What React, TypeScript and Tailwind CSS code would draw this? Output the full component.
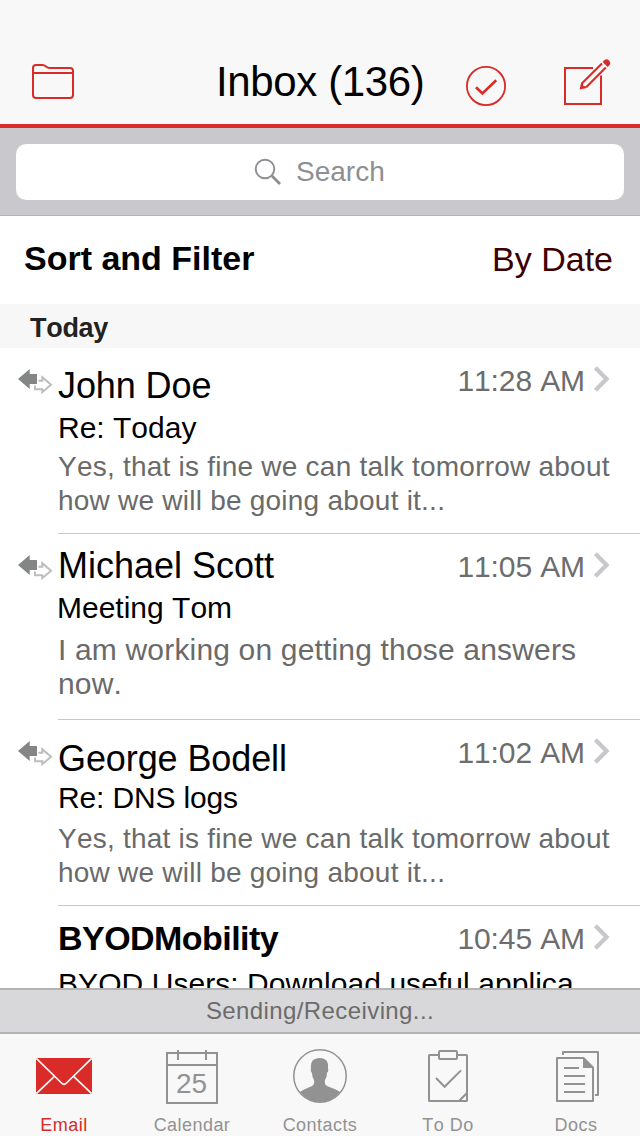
import type { ReactNode } from "react";

const ReplyIcon = () => (
  <svg className="mt-5 ml-[17px] h-7 w-9 shrink-0" viewBox="17 368 36 28" fill="none">
    <path d="M38.5 380.7H42.3V377.3L51 384.8L42.3 392.2V389.2H35V385.5" stroke="#bdbdbd" strokeWidth="2" />
    <path d="M18 379L29.7 369V374H37V384H29.7V389Z" fill="#848685" />
  </svg>
);

const Chevron = () => (
  <svg className="mt-[18px] ml-[8px] h-[26px] w-[18px] shrink-0" viewBox="593 366 18 26" fill="none">
    <path d="M595.4 367.7L606.6 379L595.4 390.3" stroke="#c7c7cc" strokeWidth="4.2" />
  </svg>
);

type MessageProps = {
  icon?: boolean;
  time: string;
  name: string;
  nameClass: string;
  subject: string;
  subjectClass: string;
  body?: string[];
  bodyClass?: string;
};

function Message({ icon, time, name, nameClass, subject, subjectClass, body, bodyClass }: MessageProps) {
  return (
    <article className="flex h-[186px] shrink-0">
      <div className="w-[58px] shrink-0">{icon && <ReplyIcon />}</div>
      <div className="flex min-w-0 flex-1 flex-col border-b border-[#c8c7cc] whitespace-nowrap">
        <div className="flex justify-between">
          <h2 className={`leading-[41px] text-black ${nameClass}`}>{name}</h2>
          <div className="flex h-[41px] pr-[29px]">
            <time className="mt-4 text-[30px] leading-[33px] tracking-[-0.1px] text-[#6d6d6d]">{time}</time>
            <Chevron />
          </div>
        </div>
        <h3 className={`text-[30px] leading-[33px] text-black ${subjectClass}`}>{subject}</h3>
        <div className={`leading-[34px] text-[#6a6a6a] ${bodyClass ?? ""}`}>
          {body?.map((line) => <p key={line}>{line}</p>)}
        </div>
      </div>
    </article>
  );
}

function Tab({ label, active, children }: { label: string; active?: boolean; children: ReactNode }) {
  return (
    <button className={`flex w-32 flex-col items-center ${active ? "text-[#d92b27]" : "text-[#929292]"}`}>
      <svg className="mt-[10px] h-16 w-16" viewBox="0 0 64 64" fill="none">{children}</svg>
      <span className="mt-[6px] text-[18px] leading-[22px] tracking-[0.45px]">{label}</span>
    </button>
  );
}

export default function App() {
  return (
    <div className="flex h-[1136px] w-[640px] flex-col overflow-hidden bg-white font-['Liberation_Sans',Arial,sans-serif] [font-kerning:none]">
      <header className="flex h-32 shrink-0 items-start border-b-4 border-[#d92b27] bg-[#f8f8f8] text-[#d92b27]">
        <svg className="mt-[60px] ml-[30px] h-[42px] w-[46px]" viewBox="30 60 46 42" fill="none" stroke="currentColor" strokeWidth="2">
          <path d="M36 65H42.5C46 65 46 68 49.5 68H70a3 3 0 0 1 3 3V95a3 3 0 0 1-3 3H36a3 3 0 0 1-3-3V68a3 3 0 0 1 3-3ZM33 73H73" />
        </svg>
        <h1 className="mt-[58px] ml-[140px] w-[248px] text-[42px] leading-[47px] tracking-[-0.38px] whitespace-nowrap text-black">Inbox (136)</h1>
        <svg className="mt-16 h-11 w-11" viewBox="464 64 44 44" fill="none" stroke="currentColor">
          <circle cx="486" cy="86" r="19.1" strokeWidth="1.8" />
          <path d="M476 87.2L482.4 93.4L496.2 80.2" strokeWidth="2.6" />
        </svg>
        <svg className="mt-14 ml-[54px] h-[52px] w-[50px]" viewBox="562 56 50 52" fill="none" stroke="currentColor">
          <path d="M593 68H565V104H601V75.5" strokeWidth="2" />
          <path d="M581.8 83.6L602 63.4M586.2 87.2L605.8 67.6" strokeWidth="2.1" />
          <path d="M579.6 89.6L581.1 82.8L583.2 83.6L583.2 86L585.6 86.2L586.8 88Z" fill="currentColor" stroke="none" />
          <path d="M602.7 62L604.3 60.2Q606.8 58 609 60.4Q611.2 63 609.4 65.2L607.6 66.9Z" fill="currentColor" stroke="none" />
        </svg>
      </header>

      <div className="h-[88px] shrink-0 border-b border-[#b2b1b6] bg-[#c9c8cd] px-4 pt-4">
        <div className="flex h-14 items-center rounded-[10px] bg-white text-[#8e8e93]">
          <svg className="ml-[237px] h-8 w-8" viewBox="253 156 32 32" fill="none" stroke="currentColor">
            <circle cx="265" cy="169" r="9.3" strokeWidth="1.9" />
            <path d="M271.8 175.8L280 184" strokeWidth="2.8" />
          </svg>
          <span className="ml-[11px] text-[28px] leading-8">Search</span>
        </div>
      </div>

      <div className="flex h-[88px] shrink-0 justify-between pr-[27px] pl-6">
        <span className="mt-[23px] text-[34px] leading-[38px] font-bold text-black">Sort and Filter</span>
        <span className="mt-6 text-[34px] leading-[38px] text-[#3d0000]">By Date</span>
      </div>

      <div className="flex h-11 shrink-0 items-center bg-[#f7f7f7] pt-1 pl-[30px] text-[27px] font-bold tracking-[-0.3px] text-[#222]">Today</div>

      <main className="flex h-[640px] shrink-0 flex-col overflow-hidden">
        <Message
          icon
          time="11:28 AM"
          name="John Doe"
          nameClass="mt-[17px] text-[36px] tracking-[-0.1px]"
          subject="Re: Today"
          subjectClass="mt-[5px]"
          body={["Yes, that is fine we can talk tomorrow about", "how we will be going about it..."]}
          bodyClass="mt-[6px] text-[28px] tracking-[0.23px]"
        />
        <Message
          icon
          time="11:05 AM"
          name="Michael Scott"
          nameClass="mt-[11px] text-[36px]"
          subject="Meeting Tom"
          subjectClass="mt-[5px] -ml-px"
          body={["I am working on getting those answers", "now."]}
          bodyClass="mt-[9px] text-[30px] tracking-[0.17px]"
        />
        <Message
          icon
          time="11:02 AM"
          name="George Bodell"
          nameClass="mt-[18px] text-[36px] tracking-[-0.1px]"
          subject="Re: DNS logs"
          subjectClass="mt-[2px] tracking-[-0.15px]"
          body={["Yes, that is fine we can talk tomorrow about", "how we will be going about it..."]}
          bodyClass="mt-[8px] text-[28px] tracking-[0.23px]"
        />
        <Message
          time="10:45 AM"
          name="BYODMobility"
          nameClass="mt-[12px] text-[34px] font-bold tracking-[-0.55px]"
          subject="BYOD Users: Download useful applica"
          subjectClass="mt-[8px] tracking-[0.06px]"
        />
      </main>

      <div className="flex h-[46px] shrink-0 items-center justify-center border-y-2 border-[#b3b3b4] bg-[#d8d8da] text-[24px] tracking-[0.4px] text-[#6b6b6b]">
        Sending/Receiving...
      </div>

      <nav className="flex h-[102px] shrink-0 bg-[#f8f8f8]">
        <Tab label="Email" active>
          <path d="M4 14H60V50H4Z" fill="currentColor" />
          <path d="M4.3 14.3L29.5 39Q32 41.5 34.5 39L59.7 14.3M4.3 49.7L22.4 32.4M59.7 49.7L41.6 32.4" stroke="#f8f8f8" strokeWidth="1.7" />
        </Tab>
        <Tab label="Calendar">
          <path d="M7 9H57V59H7ZM7 21H57M18 6V16M46 6V16" stroke="currentColor" strokeWidth="2" />
          <text x="16" y="49" fontSize="28" fill="currentColor">25</text>
        </Tab>
        <Tab label="Contacts">
          <circle cx="32" cy="32" r="26.2" stroke="currentColor" strokeWidth="1.5" />
          <path d="M12 48Q14 46 24 42Q27 40 26 36Q24 33 24 29Q22 27 23 24Q22 14 32 14Q41 14 40 24Q41 27 39 29Q39 33 37 36Q36 40 39 42Q50 46 52 48Q44 58 32 58Q20 58 12 48Z" fill="currentColor" />
        </Tab>
        <Tab label="To Do">
          <path d="M22 11H13.6Q13 11 13 11.6V56.4Q13 57 13.6 57H50.4Q51 57 51 56.4V11.6Q51 11 50.4 11H42" stroke="currentColor" strokeWidth="2" />
          <rect x="23" y="7" width="18" height="8" rx="1" stroke="currentColor" strokeWidth="2" />
          <path d="M20 34L28.6 42.8L45 26.4M43 57L51 49" stroke="currentColor" strokeWidth="2" />
        </Tab>
        <Tab label="Docs">
          <path d="M19 11V8H54V51H51" stroke="currentColor" strokeWidth="2" strokeLinejoin="round" />
          <path d="M13 14H39.5L49 23.5V57H13Z" stroke="currentColor" strokeWidth="2" strokeLinejoin="round" />
          <path d="M39 13.5V24H49.5ZM20 23H35V25H20ZM20 31H41V33H20ZM20 39H41V41H20ZM20 47H41V49H20Z" fill="currentColor" />
        </Tab>
      </nav>
    </div>
  );
}
